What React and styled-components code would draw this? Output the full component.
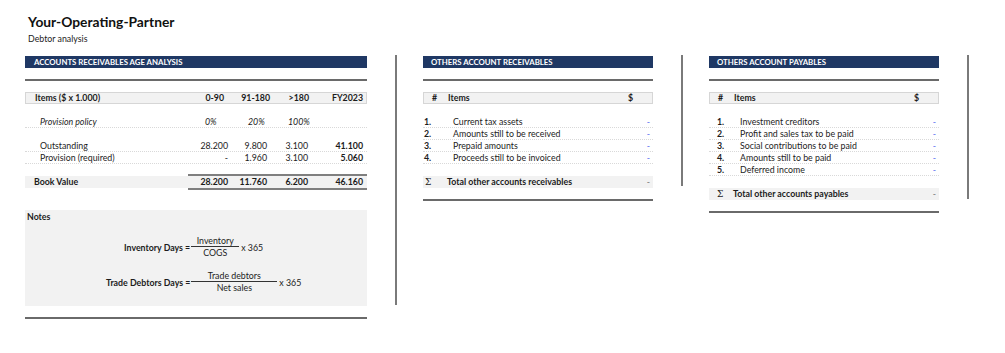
import React from "react"
import styled, { createGlobalStyle } from "styled-components"

const ageRows = [
	{ label: "Outstanding", values: ["28.200", "9.800", "3.100", "41.100"] },
	{ label: "Provision (required)", values: ["-", "1.960", "3.100", "5.060"] },
]

const bookValues = ["28.200", "11.760", "6.200", "46.160"]

// right padding of each number column, shared by value rows and the book value row
const numberPad = [2, 3, 2, 4]

const receivables = [
	"Current tax assets",
	"Amounts still to be received",
	"Prepaid amounts",
	"Proceeds still to be invoiced",
]

const payables = [
	"Investment creditors",
	"Profit and sales tax to be paid",
	"Social contributions to be paid",
	"Amounts still to be paid",
	"Deferred income",
]

const App = () => {
	return (
		<Page>
			<GlobalStyle />
			<Header>
				<Title>Your-Operating-Partner</Title>
				<Subtitle>Debtor analysis</Subtitle>
			</Header>

			<Columns>
				<Panel $w={342}>
					<SectionBar $indent={9}>ACCOUNTS RECEIVABLES AGE ANALYSIS</SectionBar>
					<Rule $mt={11} />

					<AgeHead>
						<Cell $pl={9}>Items ($ x 1.000)</Cell>
						<Cell $right $pr={7}>0-90</Cell>
						<Cell $right $pr={1}>91-180</Cell>
						<Cell $right $pr={2}>&gt;180</Cell>
						<Cell $right $pr={5}>FY2023</Cell>
					</AgeHead>

					<AgeRow $mt={12} $italic>
						<Cell $pl={15}>Provision policy</Cell>
						<Cell $pl={17}>0%</Cell>
						<Cell $pl={18}>20%</Cell>
						<Cell $pl={18}>100%</Cell>
						<Cell />
					</AgeRow>

					{ageRows.map((row, i) => (
						<AgeRow key={row.label} $mt={i === 0 ? 12 : 0}>
							<Cell $pl={15}>{row.label}</Cell>
							{row.values.map((v, j) => (
								<Cell key={j} $right $pr={numberPad[j]} $bold={j === 3}>
									{v}
								</Cell>
							))}
						</AgeRow>
					))}

					<BookRow>
						<BookCell $pl={9}>Book Value</BookCell>
						{bookValues.map((v, j) => (
							<BookCell key={v} $ruled $right $pr={numberPad[j]}>
								{v}
							</BookCell>
						))}
					</BookRow>

					<Notes>
						<NotesTitle>Notes</NotesTitle>
						<Formula $pl={99}>
							<FormulaLabel>Inventory Days =</FormulaLabel>
							<Fraction $w={48}>
								<Numerator>Inventory</Numerator>
								<Denominator>COGS</Denominator>
							</Fraction>
							<Times>x 365</Times>
						</Formula>
						<Formula $pl={81}>
							<FormulaLabel>Trade Debtors Days =</FormulaLabel>
							<Fraction $w={86}>
								<Numerator>Trade debtors</Numerator>
								<Denominator>Net sales</Denominator>
							</Fraction>
							<Times>x 365</Times>
						</Formula>
					</Notes>
					<Rule $mt={11} />
				</Panel>

				<Divider $h={250} />

				<Panel $w={230}>
					<SectionBar $indent={8}>OTHERS ACCOUNT RECEIVABLES</SectionBar>
					<Rule $mt={11} />
					<ListHead>
						<Cell $pl={8}>#</Cell>
						<Cell>Items</Cell>
						<Cell $pr={19}>$</Cell>
					</ListHead>
					{receivables.map((item, i) => (
						<ListRow key={item} $num={30} $mt={i === 0 ? 12 : 0}>
							<Cell $pl={1} $bold>{i + 1}.</Cell>
							<Cell>{item}</Cell>
							<Value>-</Value>
						</ListRow>
					))}
					<TotalRow>
						<Sigma $pl={2}>Σ</Sigma>
						<Cell>Total other accounts receivables</Cell>
						<TotalValue>-</TotalValue>
					</TotalRow>
					<Rule $mt={11} />
				</Panel>

				<Divider $h={131} />

				<Panel $w={230}>
					<SectionBar $indent={8}>OTHERS ACCOUNT PAYABLES</SectionBar>
					<Rule $mt={11} />
					<ListHead>
						<Cell $pl={8}>#</Cell>
						<Cell>Items</Cell>
						<Cell $pr={19}>$</Cell>
					</ListHead>
					{payables.map((item, i) => (
						<ListRow key={item} $num={31} $mt={i === 0 ? 12 : 0}>
							<Cell $pl={8} $bold>{i + 1}.</Cell>
							<Cell>{item}</Cell>
							<Value>-</Value>
						</ListRow>
					))}
					<TotalRow>
						<Sigma $pl={8}>Σ</Sigma>
						<Cell>Total other accounts payables</Cell>
						<TotalValue>-</TotalValue>
					</TotalRow>
					<Rule $mt={11} />
				</Panel>

				<Divider $h={144} />
			</Columns>
		</Page>
	)
}

export default App

const GlobalStyle = createGlobalStyle`
	body {
		margin: 0;
		background: #ffffff;
		font-family: Lato, "Open Sans", sans-serif;
		color: #1c1c1c;
	}
`
const Page = styled.div`
	width: 1005px;
	height: 353px;
	overflow: hidden;
`
const Header = styled.header`
	padding: 13px 0 0 28px;
`
const Title = styled.h1`
	margin: 0;
	font-size: 13.8px;
	line-height: 18px;
	font-weight: 700;
	color: #111;
`
const Subtitle = styled.div`
	margin-top: 2px;
	font-size: 8.8px;
	line-height: 12px;
`
const Columns = styled.div`
	display: flex;
	align-items: flex-start;
	margin-top: 10px;
	padding-left: 25px;
`
const Panel = styled.section`
	width: ${(p) => p.$w}px;
	flex-shrink: 0;
	padding-top: 1px;
	display: flex;
	flex-direction: column;
	font-size: 8.8px;
`
const Divider = styled.div`
	width: 2px;
	height: ${(p) => p.$h}px;
	margin: 0 26px 0 28px;
	background: #7a7a7a;
	flex-shrink: 0;
`
const SectionBar = styled.div`
	height: 12px;
	line-height: 12px;
	background: #1f3864;
	color: #ffffff;
	font-weight: 700;
	font-size: 7.8px;
	padding-left: ${(p) => p.$indent}px;
	white-space: nowrap;
`
const Rule = styled.div`
	margin-top: ${(p) => p.$mt}px;
	height: 2px;
	background: #6a6a6a;
`
const Cell = styled.div`
	padding-left: ${(p) => p.$pl || 0}px;
	padding-right: ${(p) => p.$pr || 0}px;
	text-align: ${(p) => (p.$right ? "right" : "left")};
	font-weight: ${(p) => (p.$bold ? 700 : "inherit")};
	white-space: nowrap;
`
const ageColumns = "163px 42px 40px 40px 57px"

const AgeHead = styled.div`
	display: grid;
	grid-template-columns: ${ageColumns};
	box-sizing: border-box;
	height: 12px;
	line-height: 10px;
	margin-top: 11px;
	border: 1px solid #d6d6d6;
	background: #f2f2f2;
	font-weight: 700;
`
const AgeRow = styled.div`
	display: grid;
	grid-template-columns: ${ageColumns};
	box-sizing: border-box;
	height: 12px;
	line-height: 11px;
	margin-top: ${(p) => p.$mt}px;
	border-bottom: 1px dotted #d9d9d9;
	font-style: ${(p) => (p.$italic ? "italic" : "normal")};
`
const BookRow = styled.div`
	display: grid;
	grid-template-columns: ${ageColumns};
	margin-top: 10px;
	font-weight: 700;
	line-height: 12px;
`
const BookCell = styled(Cell)`
	background: #f2f2f2;
	background-clip: padding-box;
	border-top: 2px solid ${(p) => (p.$ruled ? "#7f7f7f" : "transparent")};
	border-bottom: 2px solid ${(p) => (p.$ruled ? "#7f7f7f" : "transparent")};
`
const Notes = styled.div`
	margin-top: 20px;
	height: 96px;
	box-sizing: border-box;
	padding-top: 1px;
	background: #f2f2f2;
`
const NotesTitle = styled.div`
	padding-left: 2px;
	font-weight: 700;
	line-height: 12px;
`
const Formula = styled.div`
	display: flex;
	align-items: center;
	margin-top: 13px;
	padding-left: ${(p) => p.$pl}px;
	white-space: nowrap;
`
const FormulaLabel = styled.span`
	font-weight: 700;
	margin-right: 1px;
`
const Fraction = styled.span`
	display: inline-flex;
	flex-direction: column;
	width: ${(p) => p.$w}px;
	text-align: center;
`
const Numerator = styled.span`
	line-height: 10px;
	border-bottom: 1px solid #333;
`
const Denominator = styled.span`
	line-height: 11px;
`
const Times = styled.span`
	margin-left: 2px;
`
const ListHead = styled.div`
	display: grid;
	grid-template-columns: 24px 1fr auto;
	box-sizing: border-box;
	height: 12px;
	line-height: 10px;
	margin-top: 11px;
	border: 1px solid #d6d6d6;
	background: #f2f2f2;
	font-weight: 700;
`
const ListRow = styled.div`
	display: grid;
	grid-template-columns: ${(p) => p.$num}px 1fr auto;
	box-sizing: border-box;
	height: 12px;
	line-height: 11px;
	margin-top: ${(p) => p.$mt}px;
	border-bottom: 1px dotted #d9d9d9;
`
const Value = styled.div`
	padding-right: 3px;
	color: #5b6ef0;
`
const TotalRow = styled.div`
	display: grid;
	grid-template-columns: 24px 1fr auto;
	height: 12px;
	line-height: 12px;
	margin-top: 12px;
	background: #f2f2f2;
	font-weight: 700;
`
const Sigma = styled(Cell)`
	font-family: "DejaVu Serif", serif;
	font-size: 9px;
	font-weight: 400;
`
const TotalValue = styled.div`
	padding-right: 3px;
	color: #777;
	font-weight: 400;
`
